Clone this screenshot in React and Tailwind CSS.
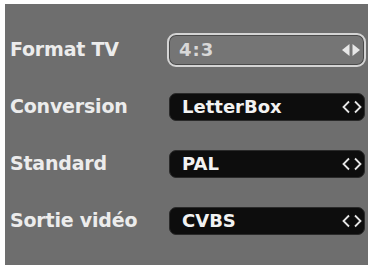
import React from "react";

function Chevrons() {
  return (
    <svg width="22" height="14" viewBox="0 0 22 14" className="shrink-0">
      <path d="M8 1.5 L2.5 7 L8 12.5" fill="none" stroke="#e6e6e6" strokeWidth="1.8" />
      <path d="M14 1.5 L19.5 7 L14 12.5" fill="none" stroke="#e6e6e6" strokeWidth="1.8" />
    </svg>
  );
}

function FilledArrows() {
  return (
    <svg width="22" height="14" viewBox="0 0 22 14" className="shrink-0">
      <path d="M9.5 1 L2 7 L9.5 13 Z" fill="#e8e8e8" />
      <path d="M12.5 1 L20 7 L12.5 13 Z" fill="#e8e8e8" />
    </svg>
  );
}

const rows = [
  { label: "Format TV", value: "4:3", active: true },
  { label: "Conversion", value: "LetterBox" },
  { label: "Standard", value: "PAL" },
  { label: "Sortie vidéo", value: "CVBS" },
];

export default function App() {
  return (
    <div
      className="w-[368px] h-[265px] bg-white pt-[4px] pl-[5px] flex"
      style={{ fontFamily: '"DejaVu Sans", sans-serif' }}
    >
      <div className="flex-1 bg-[#6e6e6e] flex flex-col pt-[17px] pl-[5px] pr-[2px]">
        {rows.map((r) => (
          <div key={r.label} className="h-[57px] flex items-center">
            <div className="w-[157px] text-[19px] font-bold text-[#ececec] leading-none tracking-[-0.2px]">
              {r.label}
            </div>
            {r.active ? (
              <div className="flex-1 h-[34px] rounded-[9px] border-2 border-[#d4d4d4] bg-[#757575] shadow-[inset_0_0_0_1px_#4a4a4a] flex items-center pl-[10px] pr-[2px]">
                <span className="flex-1 text-[18px] font-bold text-[#d8d8d8] leading-none tracking-[1px]">
                  {r.value}
                </span>
                <FilledArrows />
              </div>
            ) : (
              <div className="flex-1 ml-[2px] mr-[1px] h-[28px] rounded-[7px] bg-[#0d0d0d] border border-[#2a2a2a] flex items-center pl-[12px] pr-[1px]">
                <span className="flex-1 text-[18px] font-bold text-[#f2f2f2] leading-none">
                  {r.value}
                </span>
                <Chevrons />
              </div>
            )}
          </div>
        ))}
      </div>
    </div>
  );
}
